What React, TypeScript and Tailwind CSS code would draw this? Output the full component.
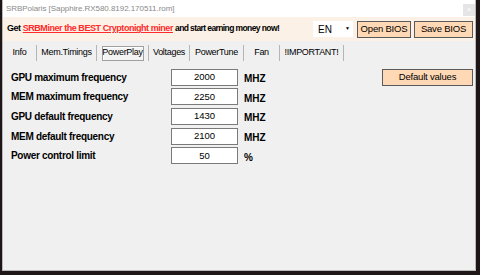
import React from "react";

const rows = [
  { label: "GPU maximum frequency", value: "2000", unit: "MHZ" },
  { label: "MEM maximum frequency", value: "2250", unit: "MHZ" },
  { label: "GPU default frequency", value: "1430", unit: "MHZ" },
  { label: "MEM default frequency", value: "2100", unit: "MHZ" },
  { label: "Power control limit", value: "50", unit: "%" },
];

const tabs = [
  { name: "Info", w: "w-[34px]" },
  { name: "Mem.Timings", w: "w-[60px]" },
  { name: "PowerPlay", w: "w-[52px]", active: true },
  { name: "Voltages", w: "w-[41px]" },
  { name: "PowerTune", w: "w-[54px]" },
  { name: "Fan", w: "w-[36px]" },
  { name: "!IMPORTANT!", w: "w-[64px]" },
];

export default function App() {
  return (
    <div className="w-[480px] h-[275px] bg-[#1e1516] pl-[2px] pr-[4px] pb-[4px] font-['Liberation_Sans',Arial,sans-serif]">
      <div className="h-full bg-[#f0f0f0] border-l border-r border-b border-[#b8b8b8] flex flex-col">
        {/* title bar */}
        <div className="h-[17px] bg-white flex items-center justify-between pl-[3px] shrink-0">
          <span className="text-[8px] text-[#8a8a8a] leading-none tracking-[-0.05px] mt-[1px]">
            SRBPolaris [Sapphire.RX580.8192.170511.rom]
          </span>
          <div className="w-[12px] h-[12px] bg-[#e5e5e5] mt-[3px] flex items-center justify-center text-[8px] text-white leading-none">
            ×
          </div>
        </div>
        {/* promo strip */}
        <div className="h-[24px] bg-[#fbf1e7] flex items-center shrink-0">
          <div className="text-[9px] font-bold text-black pl-[4px] tracking-[-0.45px] whitespace-nowrap">
            Get{" "}
            <span className="text-[#ff2a2a] underline">SRBMiner the BEST Cryptonight miner</span>{" "}
            <span className="text-[8.5px] tracking-[-0.6px]">and start earning money now!</span>
          </div>
          <div className="ml-auto flex items-center shrink-0">
            <div className="w-[40px] h-[16px] bg-white flex items-center justify-between pl-[5px] pr-[3px] text-[10px] text-black">
              <span>EN</span>
              <span className="text-[5px]">▼</span>
            </div>
            <div className="ml-[4px] w-[54px] h-[17px] bg-[#ffd9b5] border border-[#5a5a5a] flex items-center justify-center text-[9.5px] text-black tracking-[-0.2px]">
              Open BIOS
            </div>
            <div className="ml-[3px] mr-[2px] w-[59px] h-[17px] bg-[#ffd9b5] border border-[#5a5a5a] flex items-center justify-center text-[9.5px] text-black tracking-[-0.2px]">
              Save BIOS
            </div>
          </div>
        </div>
        {/* tabs */}
        <div className="h-[24px] flex items-center shrink-0">
          {tabs.map((t) => (
            <div key={t.name} className={`${t.w} h-[16px] flex items-center justify-center border-r border-[#b5b5b5] text-[9px] text-black tracking-[-0.3px]`}>
              {t.active ? (
                <div className="w-[42px] h-[15px] border border-[#a0a0a0] shadow-[inset_1px_1px_0_#ffffff] bg-[#f4f4f4] flex items-center justify-center">
                  {t.name}
                </div>
              ) : (
                t.name
              )}
            </div>
          ))}
        </div>
        {/* content */}
        <div className="flex pl-[8px] pt-[4px]">
          <div className="flex flex-col gap-[3px]">
            {rows.map((r) => (
              <div key={r.label} className="flex items-center h-[16.6px]">
                <div className="w-[160px] text-[10px] font-bold text-black tracking-[-0.3px]">{r.label}</div>
                <div className="w-[67px] h-[17px] bg-white border border-[#7a7a7a] flex items-center justify-center text-[9.5px] text-black">
                  {r.value}
                </div>
                <div className="ml-[6px] mt-[3px] text-[10px] font-bold text-black">{r.unit}</div>
              </div>
            ))}
          </div>
          <div className="ml-auto mr-[2px] w-[91px] h-[17px] bg-[#ffd9b5] border border-[#5a5a5a] flex items-center justify-center text-[9.5px] text-black tracking-[-0.2px]">
            Default values
          </div>
        </div>
      </div>
    </div>
  );
}
